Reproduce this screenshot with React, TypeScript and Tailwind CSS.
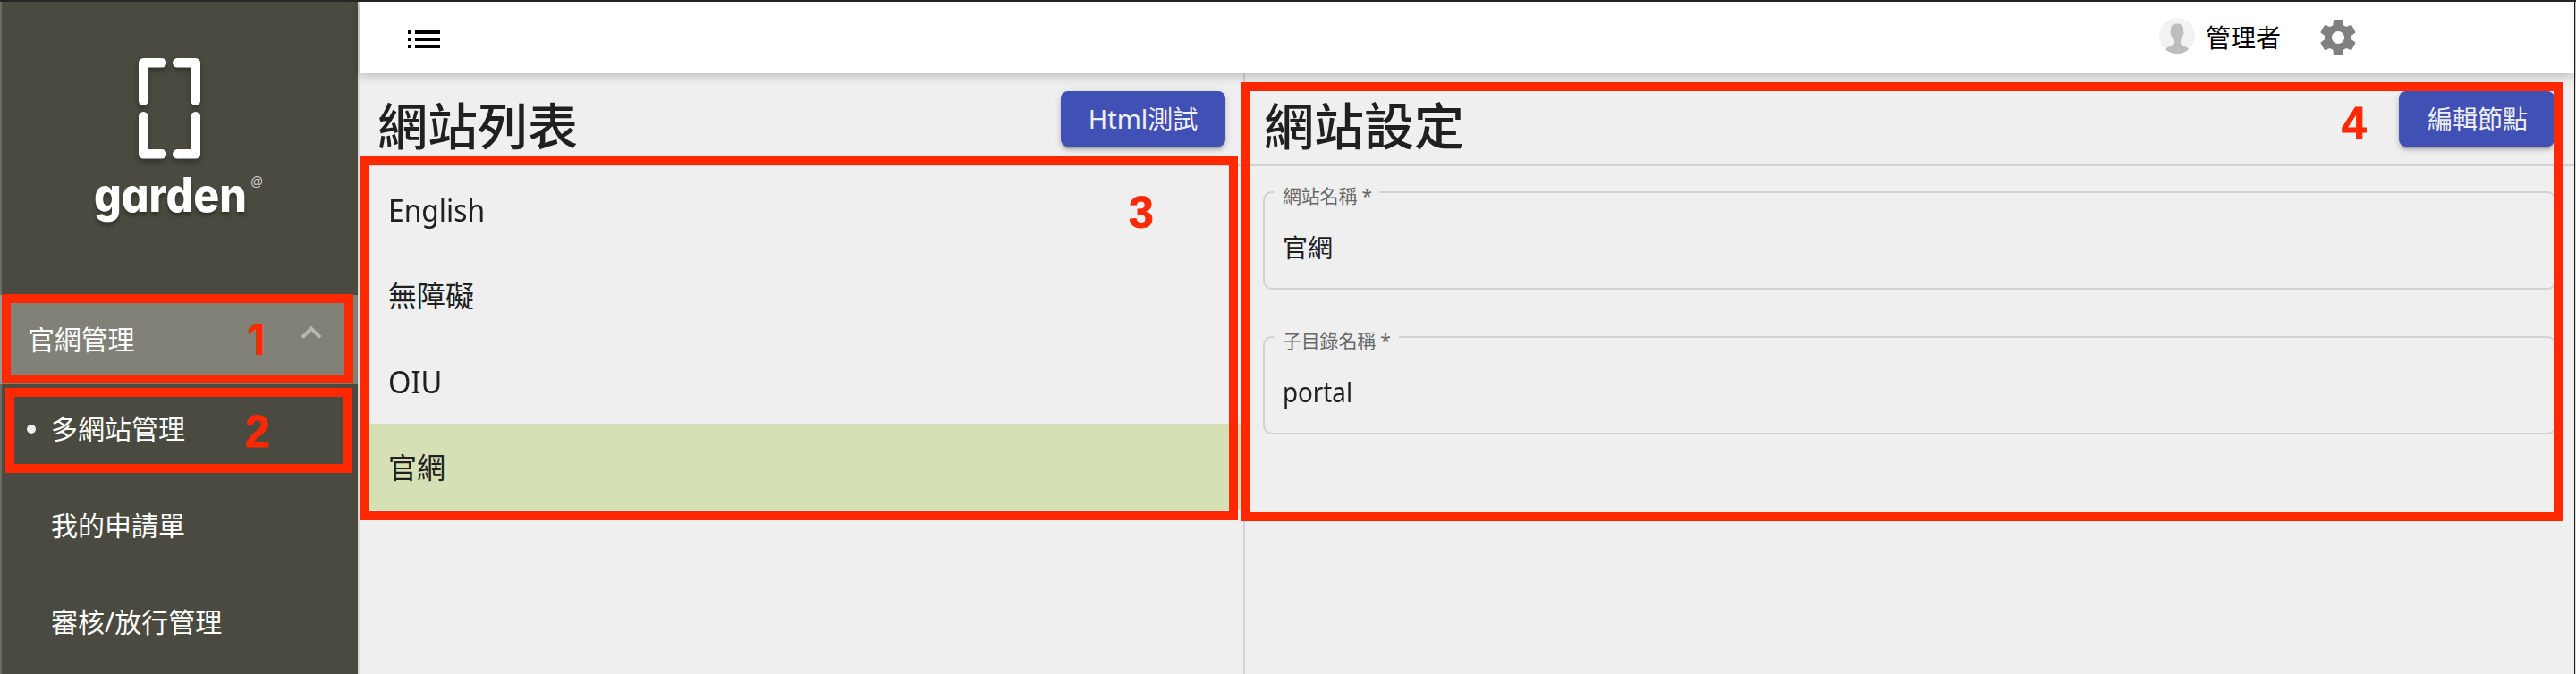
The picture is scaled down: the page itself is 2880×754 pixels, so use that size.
import type { ReactNode } from "react";

const cjk = "font-['Noto_Sans','Noto_Sans_CJK_TC',sans-serif]";

function Latin({ children, className = "" }: { children: ReactNode; className?: string }) {
  return <span className={`inline-block origin-left whitespace-nowrap ${className}`}>{children}</span>;
}

function Callout({
  box,
  digit,
  label,
  face = "font-['Liberation_Sans',sans-serif] text-[50px] [-webkit-text-stroke:0.8px_#ff2800]",
}: {
  box: string;
  digit: string;
  label: string;
  face?: string;
}) {
  return (
    <>
      <div className={`absolute border-[10px] border-[#ff2800] ${box}`} />
      <span className={`absolute leading-[50px] font-bold text-[#ff2800] ${face} ${digit}`}>{label}</span>
    </>
  );
}

function Logo() {
  return (
    <div className="relative h-[328px] shrink-0">
      <svg
        className="absolute top-[61px] left-[151px] drop-shadow-[0_4px_3px_rgba(0,0,0,0.3)]"
        width="76"
        height="120"
        fill="none"
        stroke="#fff"
        strokeWidth="10.6"
        strokeLinecap="round"
        strokeLinejoin="round"
      >
        <path d="M7.3 49.7V7.3H28M45.3 7.3H65.7V49.7M7.3 67.3V109.3H28M45.3 109.3H65.7V67.3" />
      </svg>
      <span className="absolute top-[184px] left-[103px] origin-left scale-x-[0.91] font-['Inter',sans-serif] text-[53px] leading-[64px] font-extrabold text-white [font-feature-settings:'cv11'] [text-shadow:0_4px_5px_rgba(0,0,0,0.3)]">
        garden
      </span>
      <span className="absolute top-[191px] left-[278px] font-['Liberation_Sans',sans-serif] text-[14px] leading-[20px] text-[#d8d8d5]">@</span>
    </div>
  );
}

function Sidebar() {
  return (
    <aside className="flex w-[400px] shrink-0 flex-col border-l-2 border-[#6d6c65] bg-[#4a4a40] text-[30px] text-white">
      <Logo />
      <div className="-ml-0.5 flex h-[100px] shrink-0 items-center justify-between border-l-2 border-[#989790] bg-[#828178] pr-[40px] pl-[29px]">
        <span className="mb-[2px] tracking-[-0.2px]">官網管理</span>
        <svg width="24" height="16" className="mb-[16px]" fill="none" stroke="#b6b5b1" strokeWidth="4">
          <path d="M2 13.5L12 3.5L22 13.5" />
        </svg>
      </div>
      <nav className="flex shrink-0 flex-col">
        <a className="flex h-[99px] items-center pl-[28px]">
          <i className="mt-[1px] mr-[17px] size-[10px] rounded-full bg-[#efefef]" />
          多網站管理
        </a>
        <a className="flex h-[116px] items-center pl-[55px]">我的申請單</a>
        <a className="flex h-[100px] items-center pl-[55px]">審核/放行管理</a>
      </nav>
    </aside>
  );
}

function Header() {
  return (
    <header className="relative z-10 flex h-[80px] shrink-0 items-center bg-white pr-[240px] pl-[54px] shadow-[0_2px_12px_rgba(0,0,0,0.25)]">
      <svg width="36" height="20" className="mt-[4px]" fill="#000">
        <path d="M0 0h4v4H0zM8 0h28v4H8zM0 8h4v4H0zM8 8h28v4H8zM0 16h4v4H0zM8 16h28v4H8z" />
      </svg>
      <svg width="40" height="40" viewBox="0 0 40 40" className="mr-[12px] mb-[4px] ml-auto">
        <clipPath id="avatar"><circle cx="20" cy="20" r="20" /></clipPath>
        <g clipPath="url(#avatar)">
          <rect width="40" height="40" fill="#f2f2f2" />
          <path fill="#bdbdbf" d="M20 6.500c5 0 7.500 2.500 7 8.500 1 .5.500 4-.7 4.600-.5 2.400-1.300 4-2.300 5v4.500c1.500 2.500 8 3.500 9.500 6.400L28 42H12l-5-6.500C8.500 32.600 14.500 31.600 16 29.100v-4.500c-1-1-1.800-2.600-2.300-5C12.500 19 12 15.500 13 15c-.5-6 2-8.500 7-8.500z" />
        </g>
      </svg>
      <span className="text-[28px] text-black">管理者</span>
      <svg viewBox="0 0 24 24" fill="#808080" className="mb-[1px] ml-[40px] size-[48px]">
        <path d="M19.43 12.98c.04-.32.07-.64.07-.98s-.03-.66-.07-.98l2.11-1.65c.19-.15.24-.42.12-.64l-2-3.46c-.12-.22-.39-.3-.61-.22l-2.490 1c-.52-.4-1.080-.73-1.690-.98l-.38-2.650C14.460 2.180 14.250 2 14 2h-4c-.25 0-.46.18-.49.42l-.38 2.650c-.61.25-1.170.59-1.690.98l-2.490-1c-.23-.09-.49 0-.61.22l-2 3.460c-.13.22-.07.49.12.64l2.110 1.650c-.04.32-.07.65-.07.98s.03.66.07.98l-2.110 1.650c-.19.15-.24.42-.12.64l2 3.460c.12.22.39.3.61.22l2.490-1c.52.4 1.080.73 1.690.98l.38 2.650c.03.24.24.42.49.42h4c.25 0 .46-.18.49-.42l.38-2.650c.61-.25 1.170-.59 1.690-.98l2.490 1c.23.09.49 0 .61-.22l2-3.460c.12-.22.07-.49-.12-.64l-2.110-1.650zM12 15.500c-1.930 0-3.500-1.570-3.500-3.500s1.570-3.500 3.500-3.500 3.500 1.570 3.500 3.500-1.570 3.500-3.500 3.500z" />
      </svg>
    </header>
  );
}

function RaisedButton({ children, className }: { children: ReactNode; className: string }) {
  return (
    <button
      className={`flex h-[62px] items-center justify-center rounded-[8px] bg-[#4150b5] text-[28px] text-[#efefef] shadow-[0_6px_2px_-4px_rgba(0,0,0,0.2),0_4px_4px_rgba(0,0,0,0.14),0_2px_10px_rgba(0,0,0,0.12)] ${className}`}
    >
      {children}
    </button>
  );
}

function PanelTitle({ title, children, className }: { title: string; children: ReactNode; className: string }) {
  return (
    <div className={`flex h-[104px] shrink-0 items-start justify-between border-b-2 border-[#d2d2d2] pt-[20px] ${className}`}>
      <h1 className="mt-[8px] text-[56px] leading-[60px] font-medium text-[#202020]">{title}</h1>
      {children}
    </div>
  );
}

function Field({ label, children, legend }: { label: string; children: ReactNode; legend: string }) {
  return (
    <fieldset className="relative mb-[52px] h-[110px] rounded-[10px] border-2 border-[#d2d2d2]">
      <span className={`absolute -top-[2px] left-[10px] h-[2px] bg-[#efefef] ${legend}`} />
      <span className="absolute -top-[13px] left-[20px] text-[21px] leading-[32px] tracking-[-0.2px] whitespace-nowrap text-[#676767]">
        {label}
      </span>
      <div className="pt-[41px] pl-[20px] text-[28px] leading-[40px]">{children}</div>
    </fieldset>
  );
}

export default function App() {
  return (
    <div className={`relative flex h-[754px] w-[2880px] overflow-hidden border-t-2 border-[#262424] bg-[#efefef] text-[#202020] ${cjk}`}>
      <Sidebar />
      <div className="flex w-[2478px] shrink-0 flex-col border-l-2 border-[#dcdcdc]">
        <Header />
        <div className="flex grow">
          <section className="flex w-[990px] shrink-0 flex-col border-r-2 border-[#d2d2d2]">
            <PanelTitle title="網站列表" className="pr-[20px] pl-[20px]">
              <RaisedButton className="w-[184px]">
                <Latin className="text-[29px]">Html</Latin>測試
              </RaisedButton>
            </PanelTitle>
            <ul className="text-[32px] *:flex *:h-[96px] *:items-center *:pt-[2px] *:pl-[32px]">
              <li><Latin className="mt-[1px] scale-x-[0.935] text-[34px]">English</Latin></li>
              <li>無障礙</li>
              <li><Latin className="mt-[1px] scale-x-[0.96] text-[34px]">OIU</Latin></li>
              <li className="bg-[#d5e1b5]">官網</li>
            </ul>
          </section>
          <section className="flex grow flex-col">
            <PanelTitle title="網站設定" className="pr-[22px] pl-[21px]">
              <RaisedButton className="w-[174px] pl-[2px]">編輯節點</RaisedButton>
            </PanelTitle>
            <div className="pt-[28px] pr-[20px] pl-[20px]">
              <Field label="網站名稱 *" legend="w-[118px]">官網</Field>
              <Field label="子目錄名稱 *" legend="w-[140px]">
                <Latin className="scale-x-[0.925] text-[30px]">portal</Latin>
              </Field>
            </div>
          </section>
        </div>
      </div>
      <div className="w-px shrink-0 bg-[#1c1c1c]" />
      <div className="w-px shrink-0 bg-[#d8d8d8]" />
      <Callout
        box="top-[327px] left-[2px] h-[100px] w-[393px]"
        digit="top-[353px] left-[276px]"
        face="font-['Inter',sans-serif] text-[48px]"
        label="1"
      />
      <Callout box="top-[432px] left-[6px] h-[95px] w-[388px]" digit="top-[456px] left-[274px]" label="2" />
      <Callout box="top-[173px] left-[402px] h-[407px] w-[982px]" digit="top-[211px] left-[1262px]" label="3" />
      <Callout box="top-[90px] left-[1388px] h-[491px] w-[1477px]" digit="top-[111px] left-[2618px]" label="4" />
    </div>
  );
}
